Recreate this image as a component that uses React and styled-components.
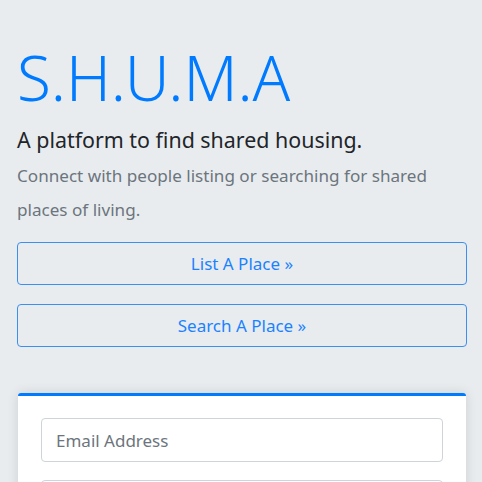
import styled, { createGlobalStyle } from 'styled-components';

const Global = createGlobalStyle`
    body {
        margin: 0;
        background: #e9ecef;
        font-family: "Noto Sans", "Open Sans", sans-serif;
        color: #212529;
    }
    * { box-sizing: border-box; }
`;

const App = () => {
    return (
    <Page>
        <Global />
        <Jumbo>
            <Title>S.H.U.M.A</Title>
            <Lead>A platform to find shared housing.</Lead>
            <Muted>Connect with people listing or searching for shared places of living.</Muted>
            <Actions>
                <OutlineButton>List A Place &raquo;</OutlineButton>
                <OutlineButton>Search A Place &raquo;</OutlineButton>
            </Actions>
        </Jumbo>
        <Card>
            <Input placeholder="Email Address" />
            <Input placeholder="Password" type="password" />
        </Card>
    </Page>
    )
}

const Page = styled.div`
    padding: 0 15px 0 17px;
    height: 482px;
    overflow: hidden;
`;

const Jumbo = styled.section`
    padding-top: 37px;
`;

const Title = styled.h1`
    margin: 0;
    font-size: 62px;
    font-weight: 300;
    line-height: 80px;
    color: #007bff;
`;

const Lead = styled.p`
    margin: 8px 0 0;
    font-size: 21.4px;
    font-weight: 400;
    line-height: 30px;
`;

const Muted = styled.p`
    margin: 4px 0 0;
    padding-right: 30px;
    font-size: 17.1px;
    line-height: 34px;
    color: #6c757d;
`;

const Actions = styled.div`
    display: flex;
    flex-direction: column;
    gap: 19px;
    margin-top: 15px;
`;

const OutlineButton = styled.button`
    height: 43px;
    border: 1px solid #3b8ff0;
    border-radius: 4px;
    background: transparent;
    color: #1a82ff;
    font-family: inherit;
    font-size: 17px;
    cursor: pointer;
`;

const Card = styled.div`
    margin: 46px 1px 0 1px;
    background: #fff;
    border-top: 3px solid #007bff;
    border-radius: 3px 3px 0 0;
    box-shadow: 0 0 12px rgba(0, 0, 0, 0.12);
    padding: 22px 23px;
    display: flex;
    flex-direction: column;
    gap: 18px;
`;

const Input = styled.input`
    height: 44px;
    border: 1px solid #ced4da;
    border-radius: 4px;
    padding: 0 14px;
    font-family: inherit;
    font-size: 17px;
    color: #495057;

    &::placeholder {
        color: #6c757d;
    }
`;

export default App;
